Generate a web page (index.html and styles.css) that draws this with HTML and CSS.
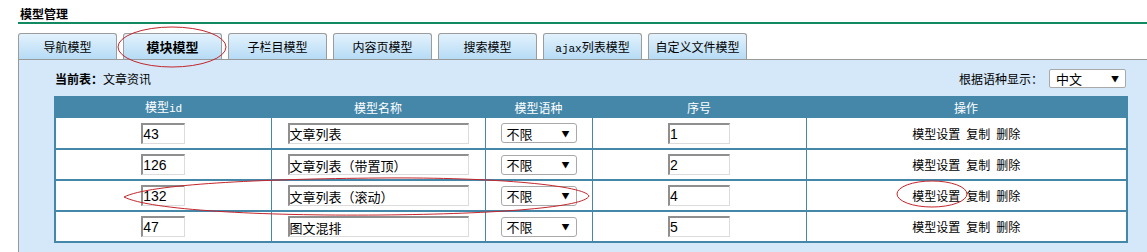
FILE: index.html
```html
<!DOCTYPE html>
<html lang="zh-CN">
<head>
    <meta charset="UTF-8">
    <title>模型管理</title>
    <link rel="stylesheet" href="styles.css">
</head>
<body>
    <div class="page">
        <h2 class="title">模型管理</h2>

        <div class="tabs">
            <a class="tab">导航模型</a>
            <a class="tab tab-active">模块模型</a>
            <a class="tab">子栏目模型</a>
            <a class="tab">内容页模型</a>
            <a class="tab">搜索模型</a>
            <a class="tab"><span class="mono">ajax</span>列表模型</a>
            <a class="tab">自定义文件模型</a>
        </div>

        <div class="panel">
            <div class="toolbar">
                <div class="current"><b>当前表：</b>文章资讯</div>
                <div class="lang">
                    根据语种显示：
                    <div class="select select-lang"><span>中文</span><i>▼</i></div>
                </div>
            </div>

            <table class="list">
                <thead>
                    <tr>
                        <th class="c-id">模型<span class="mono">id</span></th>
                        <th class="c-name">模型名称</th>
                        <th class="c-lang">模型语种</th>
                        <th class="c-seq">序号</th>
                        <th class="c-op">操作</th>
                    </tr>
                </thead>
                <tbody>
                    <tr>
                        <td><input class="in in-id" value="43"></td>
                        <td><input class="in in-name" value="文章列表"></td>
                        <td><div class="select"><span>不限</span><i>▼</i></div></td>
                        <td><input class="in in-seq" value="1"></td>
                        <td class="ops"><a>模型设置</a><a>复制</a><a>删除</a></td>
                    </tr>
                    <tr>
                        <td><input class="in in-id" value="126"></td>
                        <td><input class="in in-name" value="文章列表（带置顶）"></td>
                        <td><div class="select"><span>不限</span><i>▼</i></div></td>
                        <td><input class="in in-seq" value="2"></td>
                        <td class="ops"><a>模型设置</a><a>复制</a><a>删除</a></td>
                    </tr>
                    <tr>
                        <td><input class="in in-id" value="132"></td>
                        <td><input class="in in-name" value="文章列表（滚动）"></td>
                        <td><div class="select"><span>不限</span><i>▼</i></div></td>
                        <td><input class="in in-seq" value="4"></td>
                        <td class="ops"><a>模型设置</a><a>复制</a><a>删除</a></td>
                    </tr>
                    <tr>
                        <td><input class="in in-id" value="47"></td>
                        <td><input class="in in-name" value="图文混排"></td>
                        <td><div class="select"><span>不限</span><i>▼</i></div></td>
                        <td><input class="in in-seq" value="5"></td>
                        <td class="ops"><a>模型设置</a><a>复制</a><a>删除</a></td>
                    </tr>
                </tbody>
            </table>
        </div>

        <!-- hand-drawn red marks over the screenshot -->
        <svg class="marks" width="1147" height="252" viewBox="0 0 1147 252">
            <ellipse cx="172" cy="47" rx="54" ry="20" />
            <path d="M124 197 C 150 184, 260 179, 380 178 C 500 177, 585 186, 589 196 C 585 207, 500 214, 380 215 C 260 216, 150 210, 124 197 Z" />
            <ellipse cx="932" cy="194" rx="35" ry="13" />
        </svg>
    </div>
</body>
</html>
```

FILE: styles.css
```css
* {
    margin: 0;
    padding: 0;
    box-sizing: border-box;
}

body {
    font-family: "Noto Sans CJK SC", "Liberation Sans", sans-serif;
    font-size: 12px;
    color: #000;
    background: #fff;
}

.page {
    position: relative;
    padding-left: 18px;
    width: 1147px;
    height: 252px;
    overflow: hidden;
}

.mono {
    font-family: "Liberation Mono", "DejaVu Sans Mono", monospace;
    font-size: 11px;
}

.title {
    height: 24px;
    padding: 6px 0 0 2px;
    font-size: 12px;
    line-height: 16px;
    font-weight: bold;
    border-bottom: 2px solid #118a62;
}

/* tabs */
.tabs {
    display: flex;
    gap: 6px;
    margin-top: 9px;
}

.tab {
    width: 99px;
    height: 26px;
    line-height: 25px;
    text-align: center;
    border: 1px solid #9c9c9c;
    border-bottom: none;
    border-radius: 3px 3px 0 0;
    background: linear-gradient(#e3f2fd, #b6dbf5);
    cursor: pointer;
}

.tab-active {
    font-weight: bold;
    font-size: 13px;
}

/* panel */
.panel {
    border-top: 1px solid #999;
    border-left: 1px solid #999;
    background: #d4e8fa;
    padding-left: 35px;
    height: 200px;
}

.toolbar {
    display: flex;
    justify-content: space-between;
    align-items: center;
    width: 1072px;
    height: 36px;
    padding: 8px 0 8px 1px;
}

.current b {
    font-weight: bold;
}

.lang {
    display: flex;
    align-items: center;
    gap: 6px;
}

.select {
    display: inline-flex;
    justify-content: space-between;
    align-items: center;
    width: 76px;
    height: 20px;
    padding: 0 6px 0 5px;
    border: 1px solid #a9a9a9;
    border-radius: 3px;
    background: #fff;
    text-align: left;
    vertical-align: middle;
    font-size: 13px;
}

.select i {
    font-style: normal;
    font-size: 8px;
}

.select-lang {
    width: 77px;
    height: 19px;
    border-radius: 2px;
    padding-left: 6px;
}

/* table */
.list {
    width: 1074px;
    border-collapse: collapse;
    border: 2px solid #4587a9;
    background: #fff;
}

.list th {
    height: 20px;
    background: #4587a9;
    color: #fff;
    font-weight: normal;
    font-size: 12px;
    line-height: 18px;
}

.list td {
    height: 31px;
    text-align: center;
    border-left: 1px solid #4587a9;
    border-bottom: 2px solid #4587a9;
}

.c-id { width: 216px; }
.c-name { width: 214px; }
.c-lang { width: 107px; }
.c-seq { width: 214px; }

.in {
    height: 21px;
    padding: 0;
    border: 1px solid;
    border-color: #8f8f8f #dcdcdc #dcdcdc #8f8f8f;
    border-width: 2px 1px 1px 2px;
    font-family: "Liberation Sans", "Noto Sans CJK SC", sans-serif;
    font-size: 14px;
    vertical-align: middle;
    outline: none;
}

.in-name {
    font-family: "Noto Sans CJK SC", sans-serif;
    font-size: 13px;
}

.in-id { width: 44px; }
.in-name { width: 181px; }
.in-seq { width: 62px; }

.ops a {
    font-size: 12px;
    color: #000;
    text-decoration: none;
    cursor: pointer;
}

.ops a + a {
    margin-left: 6px;
}

/* annotation layer */
.marks {
    position: absolute;
    top: 0;
    left: 0;
    pointer-events: none;
}

.marks ellipse,
.marks path {
    fill: none;
    stroke: #c4262c;
    stroke-width: 1;
}
```
